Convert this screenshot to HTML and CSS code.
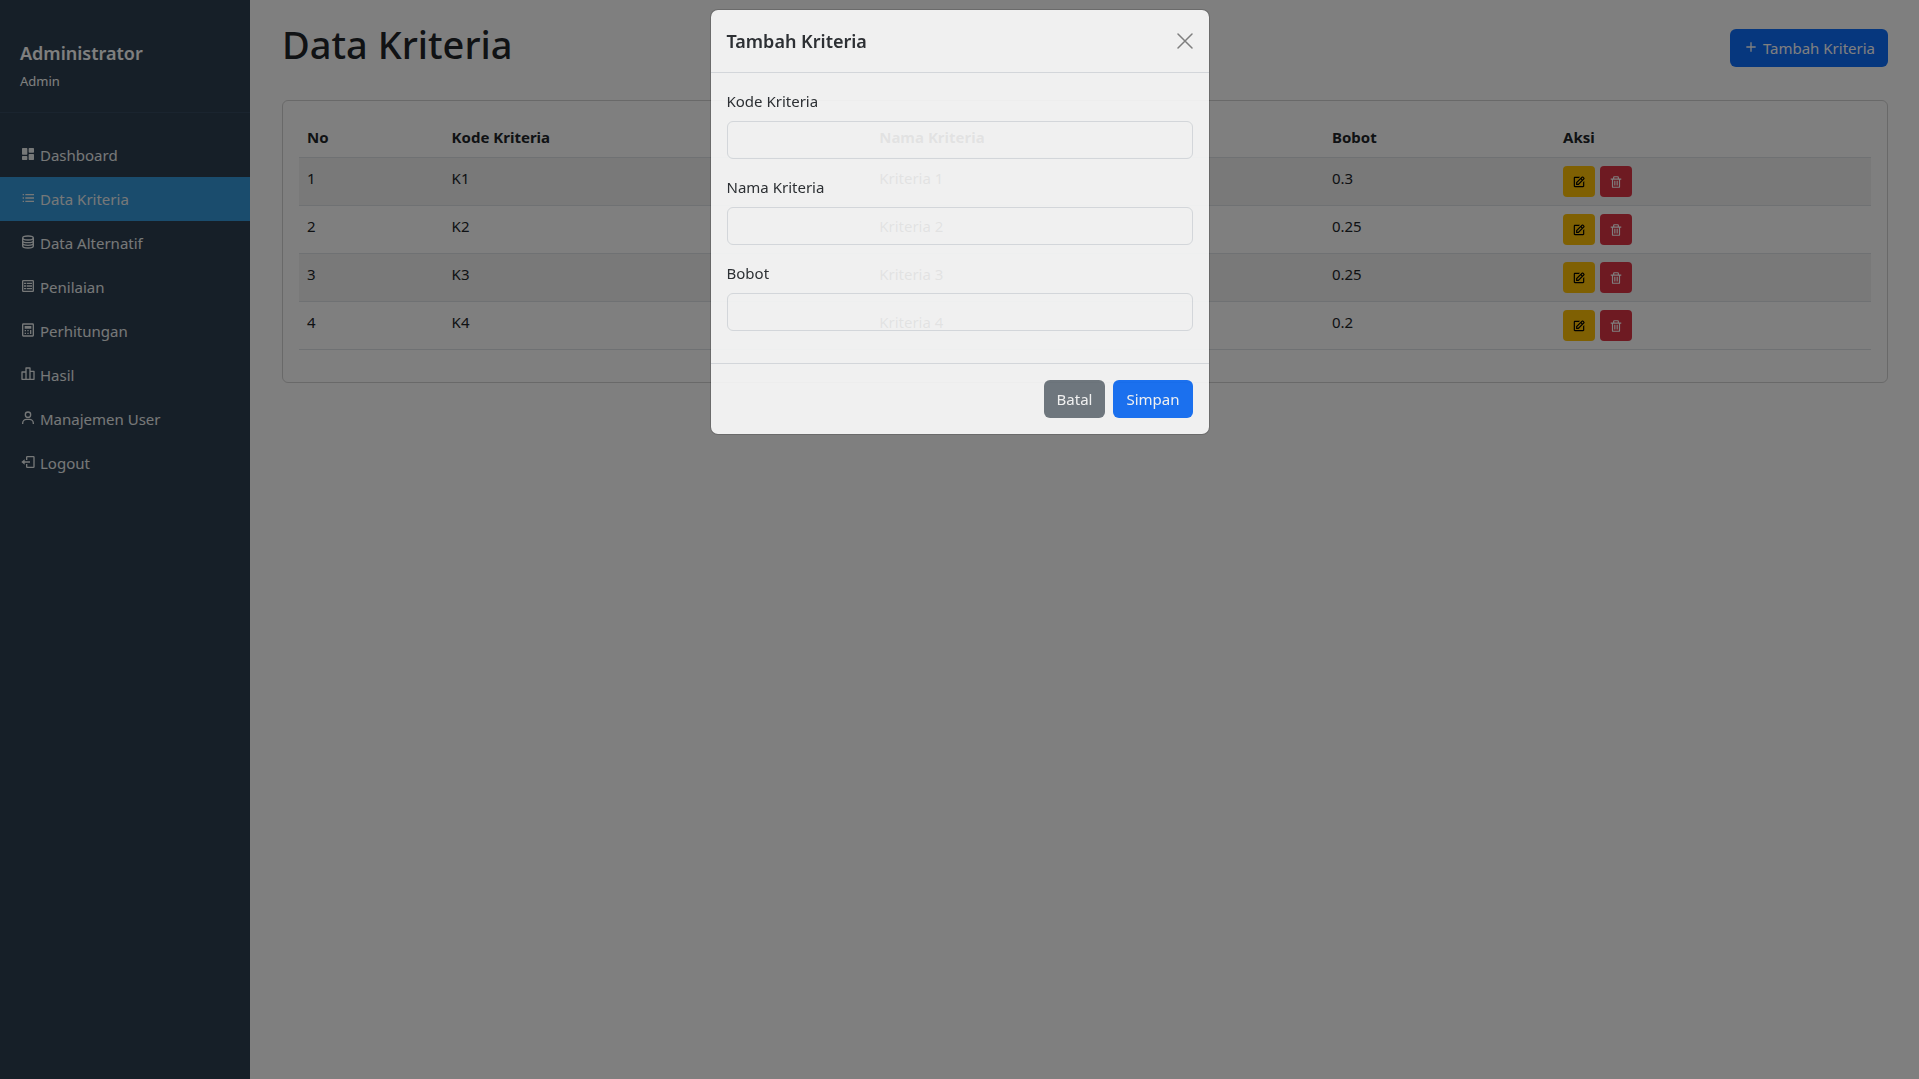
FILE: index.html
```html
<!DOCTYPE html>
<html lang="id">
<head>
    <meta charset="UTF-8">
    <meta name="viewport" content="width=device-width, initial-scale=1.0">
    <title>Data Kriteria</title>
    <link rel="stylesheet" href="styles.css">
</head>
<body>

    <!-- Icons -->
    <svg class="icon-defs" aria-hidden="true">
        <symbol id="icon-dashboard" viewBox="0 0 24 24">
            <path d="M4 13h6a1 1 0 0 0 1-1V4a1 1 0 0 0-1-1H4a1 1 0 0 0-1 1v8a1 1 0 0 0 1 1zm-1 7a1 1 0 0 0 1 1h6a1 1 0 0 0 1-1v-4a1 1 0 0 0-1-1H4a1 1 0 0 0-1 1v4zm10 0a1 1 0 0 0 1 1h6a1 1 0 0 0 1-1v-7a1 1 0 0 0-1-1h-6a1 1 0 0 0-1 1v7zm1-10h6a1 1 0 0 0 1-1V4a1 1 0 0 0-1-1h-6a1 1 0 0 0-1 1v5a1 1 0 0 0 1 1z"/>
        </symbol>
        <symbol id="icon-list" viewBox="0 0 24 24">
            <path d="M4 6h2v2H4zm0 5h2v2H4zm0 5h2v2H4zM8 6h13v2H8zm0 5h13v2H8zm0 5h13v2H8z"/>
        </symbol>
        <symbol id="icon-data" viewBox="0 0 24 24">
            <g fill="none" stroke="currentColor" stroke-width="2">
                <ellipse cx="12" cy="6" rx="8" ry="3"/>
                <path d="M4 6v12c0 1.700 3.600 3 8 3s8-1.300 8-3V6M4 10c0 1.700 3.600 3 8 3s8-1.300 8-3M4 14c0 1.700 3.600 3 8 3s8-1.300 8-3"/>
            </g>
        </symbol>
        <symbol id="icon-table" viewBox="0 0 24 24">
            <path d="M19 3H5a2 2 0 0 0-2 2v14a2 2 0 0 0 2 2h14a2 2 0 0 0 2-2V5a2 2 0 0 0-2-2zM5 19V5h14v14z"/>
            <path d="M6 7h3v2H6zm4 0h8v2h-8zm-4 4h3v2H6zm4 0h8v2h-8zm-4 4h3v2H6zm4 0h8v2h-8z"/>
        </symbol>
        <symbol id="icon-calculator" viewBox="0 0 24 24">
            <path d="M19 2H5a2 2 0 0 0-2 2v16a2 2 0 0 0 2 2h14a2 2 0 0 0 2-2V4a2 2 0 0 0-2-2zM5 20V4h14v16z"/>
            <path d="M7 6h10v4H7zm0 6h2v2H7zm0 4h2v2H7zm4-4h2v2h-2zm0 4h2v2h-2zm4-4h2v6h-2z"/>
        </symbol>
        <symbol id="icon-chart" viewBox="0 0 24 24">
            <path d="M2 9v11a1 1 0 0 0 1 1h18a1 1 0 0 0 1-1V8a1 1 0 0 0-1-1h-5V3a1 1 0 0 0-1-1H9a1 1 0 0 0-1 1v5H3a1 1 0 0 0-1 1zm14 0h4v10h-4zm-6-5h4v15h-4zm-6 6h4v9H4z"/>
        </symbol>
        <symbol id="icon-user" viewBox="0 0 24 24">
            <path d="M12 2a5 5 0 1 0 5 5 5 5 0 0 0-5-5zm0 8a3 3 0 1 1 3-3 3 3 0 0 1-3 3zm9 11v-1a7 7 0 0 0-7-7h-4a7 7 0 0 0-7 7v1h2v-1a5 5 0 0 1 5-5h4a5 5 0 0 1 5 5v1z"/>
        </symbol>
        <symbol id="icon-logout" viewBox="0 0 24 24">
            <path d="M2 12l5 4v-3h8v-2H7V8z"/>
            <path d="M20 3h-9a2 2 0 0 0-2 2v4h2V5h9v14h-9v-4H9v4a2 2 0 0 0 2 2h9a2 2 0 0 0 2-2V5a2 2 0 0 0-2-2z"/>
        </symbol>
        <symbol id="icon-plus" viewBox="0 0 24 24">
            <path d="M19 11h-6V5h-2v6H5v2h6v6h2v-6h6z"/>
        </symbol>
        <symbol id="icon-edit" viewBox="0 0 24 24">
            <path d="m7 17.013 4.413-.015 9.632-9.540c.378-.378.586-.880.586-1.414s-.208-1.036-.586-1.414l-1.586-1.586c-.756-.756-2.075-.752-2.825-.003L7 12.583v4.430zM18.045 4.458l1.589 1.583-1.597 1.582-1.586-1.585 1.594-1.580zM9 13.417l6.030-5.973 1.586 1.586-6.029 5.971L9 15.006v-1.589z"/>
            <path d="M5 21h14c1.103 0 2-.897 2-2v-8.668l-2 2V19H5V5h6.847l2-2H5c-1.103 0-2 .897-2 2v14c0 1.103.897 2 2 2z"/>
        </symbol>
        <symbol id="icon-trash" viewBox="0 0 24 24">
            <path d="M5 20a2 2 0 0 0 2 2h10a2 2 0 0 0 2-2V8h2V6h-4V4a2 2 0 0 0-2-2H9a2 2 0 0 0-2 2v2H3v2h2zM9 4h6v2H9zM8 8h9v12H7V8z"/>
            <path d="M9 10h2v8H9zm4 0h2v8h-2z"/>
        </symbol>
    </svg>

    <nav class="sidebar">
        <div class="sidebar-header">
            <h2>Administrator</h2>
            <small>Admin</small>
        </div>
        <ul class="sidebar-menu">
            <li><a href="#"><svg class="icon"><use href="#icon-dashboard"/></svg>Dashboard</a></li>
            <li><a href="#" class="active"><svg class="icon"><use href="#icon-list"/></svg>Data Kriteria</a></li>
            <li><a href="#"><svg class="icon"><use href="#icon-data"/></svg>Data Alternatif</a></li>
            <li><a href="#"><svg class="icon"><use href="#icon-table"/></svg>Penilaian</a></li>
            <li><a href="#"><svg class="icon"><use href="#icon-calculator"/></svg>Perhitungan</a></li>
            <li><a href="#"><svg class="icon"><use href="#icon-chart"/></svg>Hasil</a></li>
            <li><a href="#"><svg class="icon"><use href="#icon-user"/></svg>Manajemen User</a></li>
            <li><a href="#"><svg class="icon"><use href="#icon-logout"/></svg>Logout</a></li>
        </ul>
    </nav>

    <main class="content">
        <div class="page-header">
            <h1>Data Kriteria</h1>
            <button type="button" class="btn btn-primary"><svg class="icon"><use href="#icon-plus"/></svg>Tambah Kriteria</button>
        </div>

        <div class="card">
            <table class="table">
                <thead>
                    <tr>
                        <th class="col-no">No</th>
                        <th class="col-kode">Kode Kriteria</th>
                        <th class="col-nama">Nama Kriteria</th>
                        <th class="col-bobot">Bobot</th>
                        <th>Aksi</th>
                    </tr>
                </thead>
                <tbody>
                    <tr>
                        <td>1</td>
                        <td>K1</td>
                        <td>Kriteria 1</td>
                        <td>0.3</td>
                        <td>
                            <div class="actions">
                                <button type="button" class="btn-sm btn-warning" aria-label="Edit"><svg class="icon"><use href="#icon-edit"/></svg></button>
                                <button type="button" class="btn-sm btn-danger" aria-label="Hapus"><svg class="icon"><use href="#icon-trash"/></svg></button>
                            </div>
                        </td>
                    </tr>
                    <tr>
                        <td>2</td>
                        <td>K2</td>
                        <td>Kriteria 2</td>
                        <td>0.25</td>
                        <td>
                            <div class="actions">
                                <button type="button" class="btn-sm btn-warning" aria-label="Edit"><svg class="icon"><use href="#icon-edit"/></svg></button>
                                <button type="button" class="btn-sm btn-danger" aria-label="Hapus"><svg class="icon"><use href="#icon-trash"/></svg></button>
                            </div>
                        </td>
                    </tr>
                    <tr>
                        <td>3</td>
                        <td>K3</td>
                        <td>Kriteria 3</td>
                        <td>0.25</td>
                        <td>
                            <div class="actions">
                                <button type="button" class="btn-sm btn-warning" aria-label="Edit"><svg class="icon"><use href="#icon-edit"/></svg></button>
                                <button type="button" class="btn-sm btn-danger" aria-label="Hapus"><svg class="icon"><use href="#icon-trash"/></svg></button>
                            </div>
                        </td>
                    </tr>
                    <tr>
                        <td>4</td>
                        <td>K4</td>
                        <td>Kriteria 4</td>
                        <td>0.2</td>
                        <td>
                            <div class="actions">
                                <button type="button" class="btn-sm btn-warning" aria-label="Edit"><svg class="icon"><use href="#icon-edit"/></svg></button>
                                <button type="button" class="btn-sm btn-danger" aria-label="Hapus"><svg class="icon"><use href="#icon-trash"/></svg></button>
                            </div>
                        </td>
                    </tr>
                </tbody>
            </table>
        </div>
    </main>

    <!-- Modal Tambah -->
    <div class="modal-backdrop">
        <div class="modal" role="dialog" aria-labelledby="modalTitle">
            <div class="modal-header">
                <h2 id="modalTitle">Tambah Kriteria</h2>
                <button type="button" class="btn-close" aria-label="Tutup">
                    <svg viewBox="0 0 16 16"><path d="M1 1l14 14M15 1L1 15"/></svg>
                </button>
            </div>
            <form>
                <div class="modal-body">
                    <div class="field">
                        <label for="kode">Kode Kriteria</label>
                        <input type="text" id="kode" name="kode" required>
                    </div>
                    <div class="field">
                        <label for="nama">Nama Kriteria</label>
                        <input type="text" id="nama" name="nama" required>
                    </div>
                    <div class="field">
                        <label for="bobot">Bobot</label>
                        <input type="text" id="bobot" name="bobot" required>
                    </div>
                </div>
                <div class="modal-footer">
                    <button type="button" class="btn btn-secondary">Batal</button>
                    <button type="submit" class="btn btn-primary">Simpan</button>
                </div>
            </form>
        </div>
    </div>

</body>
</html>
```
FILE: styles.css
```css
* {
    box-sizing: border-box;
}

body {
    font-family: "Segoe UI", "Noto Sans", sans-serif;
    font-size: 15px;
    line-height: 24px;
    margin: 0;
    display: flex;
    min-height: 100vh;
    background-color: #fff;
    color: #212529;
}

h1, h2 {
    margin: 0;
}

button, input {
    font: inherit;
}

.icon-defs {
    position: absolute;
    width: 0;
    height: 0;
}

.icon {
    width: 16px;
    height: 16px;
    fill: currentColor;
    flex-shrink: 0;
}

/* Sidebar */
.sidebar {
    width: 250px;
    flex-shrink: 0;
    padding-top: 20px;
    background-color: #2c3e50;
    color: #fff;
}

.sidebar-header {
    padding: 20px;
    border-bottom: 1px solid #34495e;
}

.sidebar-header h2 {
    font-size: 18px;
    font-weight: 600;
    line-height: 26px;
    margin-bottom: 4px;
}

.sidebar-header small {
    display: block;
    font-size: 13px;
    line-height: 22px;
}

.sidebar-menu {
    list-style: none;
    margin: 0;
    padding: 20px 0;
}

.sidebar-menu a {
    display: flex;
    align-items: center;
    gap: 4px;
    padding: 10px 20px;
    color: #ecf0f1;
    text-decoration: none;
}

.sidebar-menu a.active {
    background-color: #3498db;
}

.sidebar-menu .icon,
.btn .icon {
    margin-bottom: 3px;
}

/* Content */
.content {
    flex: 1;
    padding: 20px 31px 20px 32px;
}

.page-header {
    display: flex;
    justify-content: space-between;
    align-items: center;
    margin-bottom: 24px;
}

.page-header h1 {
    font-size: 38px;
    font-weight: 500;
    line-height: 48px;
    margin-bottom: 8px;
}

.btn {
    display: flex;
    align-items: center;
    gap: 4px;
    padding: 6px 12px;
    border: 1px solid transparent;
    border-radius: 6px;
    color: #fff;
    cursor: pointer;
}

.btn-primary {
    background-color: #0d6efd;
}

.btn-secondary {
    background-color: #6c757d;
}

.card {
    border: 1px solid rgba(0, 0, 0, 0.175);
    border-radius: 6px;
    padding: 16px;
}

.table {
    width: 100%;
    table-layout: fixed;
    border-collapse: separate;
    border-spacing: 0;
    margin-bottom: 16px;
}

.table th,
.table td {
    padding: 8px;
    border-bottom: 1px solid #dee2e6;
    text-align: left;
    vertical-align: top;
}

.table tbody tr:nth-child(odd) {
    background-color: rgba(0, 0, 0, 0.05);
}

.col-no {
    width: 9.2%;
}

.col-kode {
    width: 27.2%;
}

.col-nama {
    width: 28.8%;
}

.col-bobot {
    width: 14.7%;
}

.actions {
    display: flex;
    gap: 5px;
}

.btn-sm {
    display: flex;
    align-items: center;
    justify-content: center;
    width: 32px;
    height: 31px;
    padding: 0;
    border: none;
    border-radius: 4px;
    cursor: pointer;
}

.btn-sm .icon {
    width: 14px;
    height: 14px;
}

.btn-warning {
    background-color: #ffc107;
    color: #000;
}

.btn-danger {
    background-color: #dc3545;
    color: #fff;
}

/* Modal */
.modal-backdrop {
    position: fixed;
    inset: 0;
    display: flex;
    justify-content: center;
    align-items: flex-start;
    padding: 9px;
    background-color: rgba(0, 0, 0, 0.5);
}

.modal {
    width: 100%;
    max-width: 500px;
    background-color: #fff;
    background-clip: padding-box;
    border: 1px solid rgba(0, 0, 0, 0.175);
    border-radius: 8px;
    opacity: 0.88;
}

.modal-header {
    display: flex;
    justify-content: space-between;
    align-items: center;
    padding: 16px;
    border-bottom: 1px solid #dee2e6;
}

.modal-header h2 {
    font-size: 18px;
    font-weight: 600;
    line-height: 30px;
}

.btn-close {
    display: flex;
    padding: 0;
    border: none;
    background: none;
    color: #000;
    opacity: 0.5;
    cursor: pointer;
}

.btn-close svg {
    width: 16px;
    height: 16px;
    fill: none;
    stroke: currentColor;
    stroke-width: 1.5;
    stroke-linecap: round;
}

.modal-body {
    padding: 16px;
}

.field {
    margin-bottom: 16px;
}

.field label {
    display: block;
    margin-bottom: 8px;
}

.field input {
    display: block;
    width: 100%;
    height: 38px;
    padding: 6px 12px;
    border: 1px solid #dee2e6;
    border-radius: 6px;
    background-color: transparent;
}

.modal-footer {
    display: flex;
    justify-content: flex-end;
    gap: 8px;
    padding: 16px;
    border-top: 1px solid #dee2e6;
}
```
